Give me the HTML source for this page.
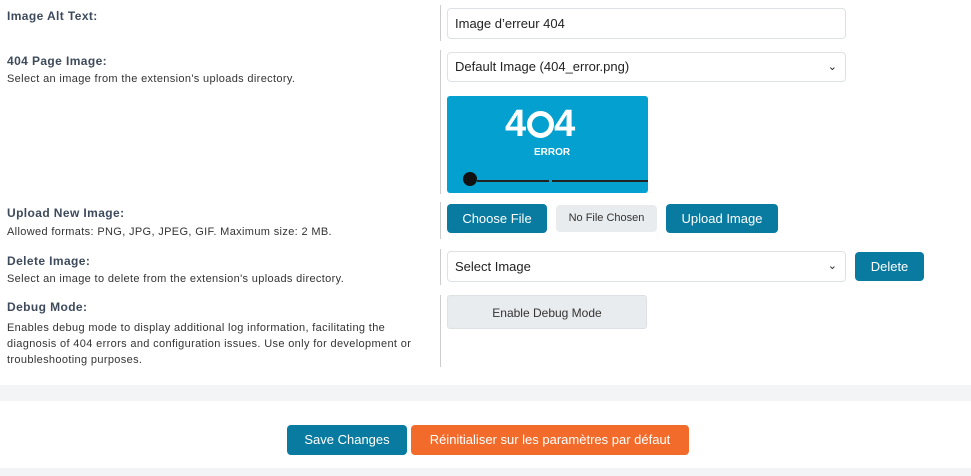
<!DOCTYPE html><html><head><style>
body{margin:0;width:971px;height:476px;background:#fff;font-family:"Liberation Sans",sans-serif;position:relative;overflow:hidden}
.a{position:absolute}
.l{left:7px;font-size:12px;font-weight:bold;color:#3d4a5c;letter-spacing:0.4px}
.d{left:7px;font-size:11px;color:#333;line-height:16px;letter-spacing:0.35px}
.v{left:440px;width:1px;background:#ccc}
.in{left:447px;width:399px;height:29px;border:1px solid #dde1e6;border-radius:4px;box-sizing:border-box;font-size:13px;color:#222;padding:0 7px;line-height:27px}
.btn{background:#0a7ba0;color:#fff;border-radius:4px;font-size:13px;text-align:center}
.ch{position:absolute;right:8px;top:0;font-size:11px}
</style></head><body>
<div class="a l" style="top:9px">Image Alt Text:</div>
<div class="a v" style="top:5px;height:36px"></div>
<div class="a in" style="top:8px;height:31px;line-height:29px">Image d’erreur 404</div>

<div class="a l" style="top:54px">404 Page Image:</div>
<div class="a d" style="top:71px">Select an image from the extension's uploads directory.</div>
<div class="a v" style="top:50px;height:144px"></div>
<div class="a in" style="top:52px;height:30px;line-height:28px">Default Image (404_error.png)<span class="ch">&#8964;</span></div>
<div class="a" style="left:447px;top:96px;width:201px;height:97px;background:#04a0cf;border-radius:3px;overflow:hidden">
<div class="a" style="left:58px;top:8px;color:#fff;font-size:38px;font-weight:bold;letter-spacing:1px;line-height:40px">4<span style="display:inline-block;width:27px;height:27px;border:5px solid #fff;border-radius:50%;vertical-align:-2px;box-sizing:border-box"></span>4</div>
<div class="a" style="left:87px;top:51px;color:#fff;font-size:10px;font-weight:bold">ERROR</div>
<div class="a" style="left:30px;top:84px;width:72px;height:2px;background:#222"></div>
<div class="a" style="left:105px;top:84px;width:96px;height:2px;background:#222"></div>
<div class="a" style="left:16px;top:76px;width:14px;height:14px;background:#111;border-radius:50%"></div>
</div>

<div class="a l" style="top:206px">Upload New Image:</div>
<div class="a d" style="top:224px">Allowed formats: PNG, JPG, JPEG, GIF. Maximum size: 2 MB.</div>
<div class="a v" style="top:202px;height:37px"></div>
<div class="a btn" style="left:447px;top:204px;width:100px;height:29px;line-height:29px">Choose File</div>
<div class="a" style="left:556px;top:205px;width:101px;height:27px;line-height:27px;background:#e9ecef;border-radius:4px;font-size:11px;color:#333;text-align:center">No File Chosen</div>
<div class="a btn" style="left:666px;top:204px;width:112px;height:29px;line-height:29px">Upload Image</div>

<div class="a l" style="top:254px">Delete Image:</div>
<div class="a d" style="top:271px">Select an image to delete from the extension's uploads directory.</div>
<div class="a v" style="top:249px;height:36px"></div>
<div class="a in" style="top:251px;height:31px;line-height:29px">Select Image<span class="ch">&#8964;</span></div>
<div class="a btn" style="left:855px;top:252px;width:69px;height:29px;line-height:29px">Delete</div>

<div class="a l" style="top:300px">Debug Mode:</div>
<div class="a d" style="top:320px">Enables debug mode to display additional log information, facilitating the<br>diagnosis of 404 errors and configuration issues. Use only for development or<br>troubleshooting purposes.</div>
<div class="a v" style="top:295px;height:72px"></div>
<div class="a" style="left:447px;top:295px;width:200px;height:34px;line-height:34px;background:#e9ecef;border:1px solid #dde1e6;box-sizing:border-box;border-radius:3px;font-size:12px;color:#333;text-align:center">Enable Debug Mode</div>

<div class="a" style="left:0;top:385px;width:971px;height:16px;background:#f3f4f6"></div>
<div class="a btn" style="left:287px;top:425px;width:120px;height:30px;line-height:30px">Save Changes</div>
<div class="a" style="left:411px;top:425px;width:278px;height:30px;line-height:30px;background:#f26b2a;color:#fff;border-radius:4px;font-size:13px;text-align:center">Réinitialiser sur les paramètres par défaut</div>
<div class="a" style="left:0;top:468px;width:971px;height:8px;background:#f3f4f6"></div>
</body></html>
